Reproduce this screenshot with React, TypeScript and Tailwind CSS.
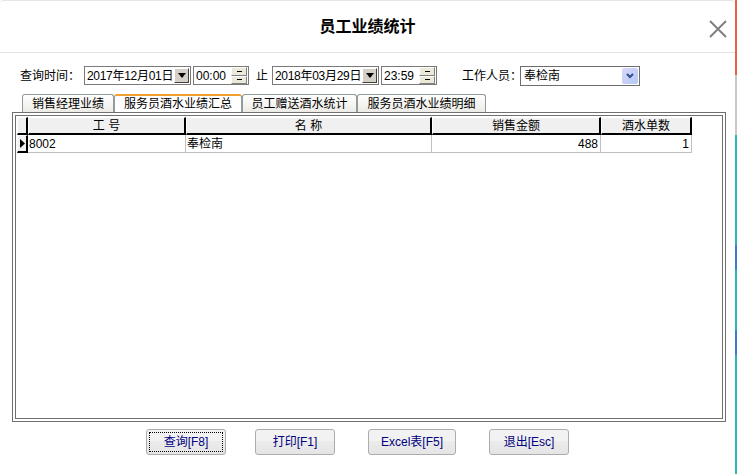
import React from "react";

const font = { fontFamily: '"Liberation Sans", "Noto Sans CJK SC", sans-serif' };

function DateBox({ value, width }: { value: string; width: string }) {
  return (
    <div className={`flex h-[19px] ${width} shrink-0 items-center overflow-hidden border border-[#7a7a7a] bg-white pl-[2px]`}>
      <span className="flex-1 whitespace-nowrap text-[12px] leading-none tracking-[-0.3px] text-black">{value}</span>
      <div className="mr-[1px] flex h-[15px] w-[15px] shrink-0 items-center justify-center border border-t-white border-l-white border-r-[#404040] border-b-[#404040] bg-[#d4d0c8]">
        <svg width="8" height="5" viewBox="0 0 8 5">
          <path d="M0 0h8L4 5z" fill="#000" />
        </svg>
      </div>
    </div>
  );
}

function TimeBox({ value }: { value: string }) {
  return (
    <div className="flex h-[19px] w-[56px] shrink-0 items-center border border-[#7a7a7a] bg-white pl-[2px]">
      <span className="flex-1 whitespace-nowrap text-[12px] leading-none text-black">{value}</span>
      <div className="mr-[1px] flex h-[17px] w-[16px] flex-col">
        <div className="flex flex-1 items-center justify-center border border-t-white border-l-white border-r-[#808080] border-b-[#808080] bg-[#ece9d8]">
          <div className="h-[1px] w-[5px] bg-black" />
        </div>
        <div className="flex flex-1 items-center justify-center border border-t-white border-l-white border-r-[#808080] border-b-[#808080] bg-[#ece9d8]">
          <div className="h-[1px] w-[5px] bg-black" />
        </div>
      </div>
    </div>
  );
}

const tabs = ["销售经理业绩", "服务员酒水业绩汇总", "员工赠送酒水统计", "服务员酒水业绩明细"];
const tabW = ["w-[92px]", "w-[128px]", "w-[115px]", "w-[129px]"];

const cols = [
  { title: "工 号", w: "w-[158px]" },
  { title: "名 称", w: "w-[246px]" },
  { title: "销售金额", w: "w-[169px]" },
  { title: "酒水单数", w: "w-[91px]" },
];

function Btn({ label, w, focus }: { label: string; w: string; focus?: boolean }) {
  return (
    <button
      className={`relative h-[26px] ${w} shrink-0 rounded-[3px] border border-[#acacac] bg-[linear-gradient(#f2f2f2_0%,#f2f2f2_45%,#ebebeb_45%,#e5e5e5_100%)] text-[12px] text-[#000080]`}
    >
      {focus && <span className="absolute inset-[2px] border border-dotted border-black" />}
      <span className="relative whitespace-nowrap">{label}</span>
    </button>
  );
}

export default function App() {
  return (
    <div className="relative h-[474px] w-[737px] overflow-hidden bg-white" style={font}>
      {/* right edge strip */}
      <div className="absolute right-0 top-0 flex h-full w-[2px] flex-col">
        <div className="h-[75px] bg-[#e8643c]" />
        <div className="h-[60px] bg-[#c8c8c8]" />
        <div className="h-[110px] bg-[#2fb5b5]" />
        <div className="h-[25px] bg-[#3a7bd5]" />
        <div className="h-[60px] bg-[#2fb5b5]" />
        <div className="h-[25px] bg-[#3a7bd5]" />
        <div className="flex-1 bg-[#2fb5b5]" />
      </div>

      <div className="flex h-full w-[735px] flex-col rounded-t-[4px] border-t border-[#e5e5e5]">
        {/* title bar */}
        <div className="relative flex h-[52px] shrink-0 items-center justify-center border-b border-[#e3e3e3]">
          <span className="text-[16px] font-bold text-black">员工业绩统计</span>
          <svg className="absolute right-[8px] top-[19px]" width="18" height="18" viewBox="0 0 18 18">
            <path d="M1 1L17 17M17 1L1 17" stroke="#808080" strokeWidth="2" />
          </svg>
        </div>

        {/* query row */}
        <div className="mt-[13px] flex h-[19px] shrink-0 items-center whitespace-nowrap text-[12px] text-black">
          <span className="ml-[20px] w-[64px] shrink-0">查询时间：</span>
          <DateBox value="2017年12月01日" width="w-[107px]" />
          <div className="w-[2px] shrink-0" />
          <TimeBox value="00:00" />
          <span className="ml-[7px] w-[16px] shrink-0">止</span>
          <DateBox value="2018年03月29日" width="w-[107px]" />
          <div className="w-[2px] shrink-0" />
          <TimeBox value="23:59" />
          <span className="ml-[25px] w-[58px] shrink-0">工作人员：</span>
          <div className="flex h-[20px] w-[120px] shrink-0 items-center border border-[#6e6e6e] bg-white pl-[3px]">
            <span className="flex-1 text-[12px]">奉检南</span>
            <div className="mr-[1px] flex h-[16px] w-[16px] items-center justify-center rounded-[2px] bg-[linear-gradient(135deg,#d8d8fa,#b4c8f4)]">
              <svg width="8" height="6" viewBox="0 0 8 6">
                <path d="M1 1l3 3 3-3" stroke="#2d4f8a" strokeWidth="2" fill="none" />
              </svg>
            </div>
          </div>
        </div>

        {/* tabs */}
        <div className="ml-[22px] mt-[9px] flex h-[18px] shrink-0 items-end">
          {tabs.map((t, i) => (
            <div
              key={t}
              className={`flex h-[18px] ${tabW[i]} items-center justify-center whitespace-nowrap rounded-t-[3px] border border-b-0 text-[12px] ${
                i === 1
                  ? "border-[#919b9c] border-t-2 border-t-[#f0a030] bg-white"
                  : "border-[#919b9c] bg-[linear-gradient(#ffffff,#ecebe6)]"
              }`}
            >
              {t}
            </div>
          ))}
        </div>

        {/* panel */}
        <div className="ml-[12px] h-[310px] w-[714px] shrink-0 border border-[#707070] p-[2px]">
          <div className="h-full w-full border border-[#707070] p-[1px]">
            <div className="h-full w-full">
              {/* header */}
              <div className="flex h-[18px] text-[12px]">
                <div className="w-[11px] border-l border-t border-r-2 border-b-2 border-l-white border-t-white border-r-black border-b-black bg-[#f0f0f0]" />
                {cols.map((c) => (
                  <div
                    key={c.title}
                    className={`flex ${c.w} items-center justify-center border-l border-t border-r-2 border-b-2 border-l-white border-t-white border-r-black border-b-black bg-[#f0f0f0]`}
                  >
                    {c.title}
                  </div>
                ))}
              </div>
              {/* data row */}
              <div className="flex h-[18px] text-[12px]">
                <div className="flex w-[11px] items-center justify-center border-l border-t border-r-2 border-b-2 border-l-white border-t-white border-r-black border-b-black bg-[#f0f0f0]">
                  <svg width="5" height="9" viewBox="0 0 5 9">
                    <path d="M0 0l5 4.5L0 9z" fill="#000" />
                  </svg>
                </div>
                <div className="flex w-[158px] items-center border-r border-b border-[#c0c0c0] pl-[1px]">8002</div>
                <div className="flex w-[246px] items-center border-r border-b border-[#c0c0c0] pl-[1px]">奉检南</div>
                <div className="flex w-[169px] items-center justify-end border-r border-b border-[#c0c0c0] pr-[2px]">488</div>
                <div className="flex w-[91px] items-center justify-end border-r border-b border-[#c0c0c0] pr-[2px]">1</div>
              </div>
            </div>
          </div>
        </div>

        {/* buttons */}
        <div className="mt-[7px] flex items-center">
          <div className="ml-[146px]" />
          <Btn label="查询[F8]" w="w-[80px]" focus />
          <div className="w-[29px] shrink-0" />
          <Btn label="打印[F1]" w="w-[80px]" />
          <div className="w-[33px] shrink-0" />
          <Btn label="Excel表[F5]" w="w-[88px]" />
          <div className="w-[33px] shrink-0" />
          <Btn label="退出[Esc]" w="w-[80px]" />
        </div>
      </div>
    </div>
  );
}
